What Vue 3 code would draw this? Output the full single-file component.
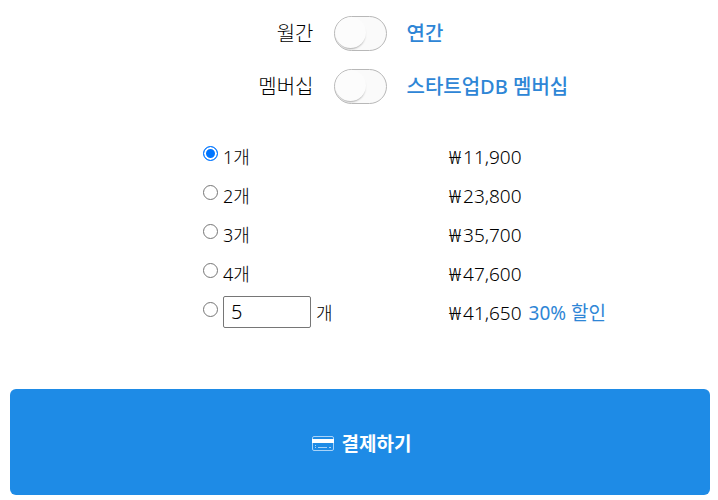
<script setup>
import { ref } from 'vue'

const yearly = ref(false)
const bundle = ref(false)
const selected = ref(1)
const customCount = ref('5')

const options = [
  { count: 1, price: '11,900' },
  { count: 2, price: '23,800' },
  { count: 3, price: '35,700' },
  { count: 4, price: '47,600' }
]
</script>

<template>
  <form class="checkout" @submit.prevent>
    <div class="toggles">
      <div class="toggle-row">
        <label class="off-label" for="yearly">월간</label>
        <input id="yearly" v-model="yearly" class="switch" type="checkbox" />
        <label class="on-label" for="yearly">연간</label>
      </div>
      <div class="toggle-row">
        <label class="off-label" for="bundle">멤버십</label>
        <input id="bundle" v-model="bundle" class="switch" type="checkbox" />
        <label class="on-label" for="bundle">스타트업DB 멤버십</label>
      </div>
    </div>

    <div class="options">
      <div v-for="o in options" :key="o.count" class="option">
        <div class="choice">
          <input :id="'count-' + o.count" v-model="selected" class="radio" type="radio" name="count" :value="o.count" />
          <label :for="'count-' + o.count">{{ o.count }}개</label>
        </div>
        <span class="price"><span class="won">₩</span>{{ o.price }}</span>
      </div>
      <div class="option">
        <div class="choice">
          <input id="count-custom" v-model="selected" class="radio" type="radio" name="count" value="custom" aria-label="개" />
          <input id="custom" v-model="customCount" class="count" type="text" inputmode="numeric" />
          <label class="unit" for="custom">개</label>
        </div>
        <span class="price"><span class="won">₩</span>41,650 <span class="discount">30% 할인</span></span>
      </div>
    </div>

    <button class="pay" type="submit">
      <svg class="card" viewBox="0 0 24 18" aria-hidden="true">
        <rect x="1.500" y="2.500" width="21" height="14" rx="1.500" fill="none" stroke="#a9d3f8" stroke-width="1" />
        <rect x="1" y="5" width="22" height="4" fill="#fff" />
        <path d="M4 13.500h1M7 13.500h9M18 13.500h2M4 11.500h1" stroke="#a9d3f8" stroke-width="1" />
      </svg>
      <span>결제하기</span>
    </button>
  </form>
</template>

<style>
body {
  margin: 0;
  background: #fff;
}
</style>

<style scoped>
.checkout {
  padding: 16px 8px 5px 10px;
  font-family: "Noto Sans", "Noto Sans CJK KR", sans-serif;
  font-size: 18px;
  font-weight: 300;
  color: #000;
}

.toggles {
  display: grid;
  gap: 18px;
}

.toggle-row {
  display: grid;
  grid-template-columns: 1fr 53px 1fr;
  column-gap: 20px;
  align-items: center;
  font-size: 20px;
  line-height: 35px;
}

.off-label {
  text-align: right;
}

.on-label {
  color: #2e86d6;
  font-weight: 500;
}

.switch {
  appearance: none;
  box-sizing: border-box;
  width: 53px;
  height: 35px;
  margin: 0;
  border: 1px solid #b8b8b8;
  border-radius: 18px;
  background: #fafafa;
  overflow: hidden;
  cursor: pointer;
}

.switch::before {
  content: "";
  display: block;
  width: 31px;
  height: 31px;
  border-radius: 50%;
  background: #fcfcfc;
  box-shadow: 0 2px 2px -1px #a8a8a8;
}

.switch:checked::before {
  margin-left: auto;
}

.options {
  margin-top: 32px;
}

.option {
  display: grid;
  grid-template-columns: 246fr 261fr;
  align-items: center;
  padding-left: 193px;
  height: 39px;
}

.choice {
  display: flex;
  align-items: center;
  gap: 5px;
}

.radio {
  appearance: none;
  box-sizing: border-box;
  width: 15px;
  height: 15px;
  margin: 0 0 4px;
  border: 1px solid #767676;
  border-radius: 50%;
  background: #fff;
}

.radio:checked {
  border-color: #0075ff;
  background: #0075ff;
  box-shadow: inset 0 0 0 2px #fff;
}

.count {
  box-sizing: border-box;
  width: 88px;
  height: 32px;
  padding: 0 7px;
  border: 1px solid #767676;
  border-radius: 2px;
  background: #fff;
  color: #000;
  font: inherit;
  font-size: 20px;
}

.price {
  padding-top: 2px;
  font-size: 19px;
  line-height: 26px;
}

.won {
  margin-right: 2px;
}

.discount {
  margin-left: 2px;
  color: #2e86d6;
  font-weight: 400;
}

.pay {
  display: flex;
  align-items: center;
  justify-content: center;
  gap: 7px;
  width: 100%;
  height: 106px;
  margin-top: 58px;
  padding: 2px 0 0 2px;
  border: 0;
  border-radius: 6px;
  background: #1e8be6;
  color: #fff;
  font: inherit;
  font-size: 19px;
  font-weight: 700;
  cursor: pointer;
}

.card {
  width: 24px;
  height: 18px;
}
</style>
